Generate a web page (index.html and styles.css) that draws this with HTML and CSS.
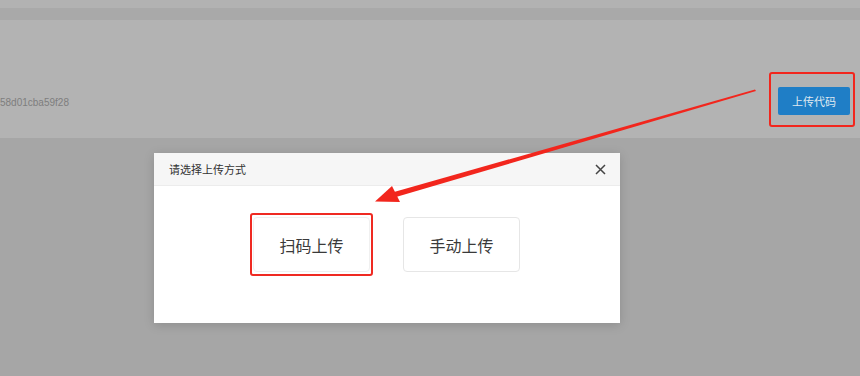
FILE: index.html
```html
<!DOCTYPE html>
<html lang="zh">
<head>
<meta charset="utf-8">
<link rel="stylesheet" href="styles.css">
</head>
<body>
<div class="page">
  <div class="topbar"></div>
  <div class="band"></div>
  <div class="panel">
    <span class="hash">58d01cba59f28</span>
    <div class="mark-box">
      <button class="btn-primary">上传代码</button>
    </div>
  </div>
  <div class="rest"></div>
</div>

<div class="dialog">
  <div class="dialog-head">
    <span class="dialog-title">请选择上传方式</span>
    <svg class="close" width="11" height="11" viewBox="0 0 11 11"><path d="M1 1L10 10M10 1L1 10" stroke="#444" stroke-width="1.5" fill="none"/></svg>
  </div>
  <div class="dialog-body">
    <div class="choice-mark">
      <div class="choice">扫码上传</div>
    </div>
    <div class="choice">手动上传</div>
  </div>
</div>

<svg class="arrow" width="860" height="376" viewBox="0 0 860 376">
  <polygon points="755,89.5 756,91 396,197 394,192" fill="#f2261d"/>
  <polygon points="375,201.5 392,186 400,202" fill="#f2261d"/>
</svg>
</body>
</html>
```

FILE: styles.css
```css
html, body {
  margin: 0;
  padding: 0;
}
body {
  width: 860px;
  height: 376px;
  overflow: hidden;
  background: #a6a6a6;
  font-family: "Liberation Sans", "Noto Sans CJK SC", sans-serif;
  position: relative;
}
.page {
  display: flex;
  flex-direction: column;
  height: 376px;
}
.topbar {
  height: 8px;
  background: #b2b2b2;
}
.band {
  height: 12px;
  background: #a9a9a9;
}
.panel {
  height: 118px;
  box-sizing: border-box;
  background: #b3b3b3;
  display: flex;
  align-items: center;
  justify-content: space-between;
  padding: 52px 5px 11px 0;
}
.hash {
  font-size: 10px;
  color: #7e7e7e;
  margin-left: 0;
  margin-top: 6px;
}
.mark-box {
  border: 2px solid #f2261d;
  border-radius: 3px;
  padding: 13px 3px 10px 7px;
}
.btn-primary {
  display: block;
  width: 72px;
  height: 28px;
  border: none;
  border-radius: 2px;
  background: #1f7ec6;
  color: #dfe8f0;
  font-family: "Noto Sans CJK SC", sans-serif;
  font-size: 11px;
  padding: 0;
}
.rest {
  flex: 1;
  background: #a6a6a6;
}
.dialog {
  position: absolute;
  left: 154px;
  top: 153px;
  width: 466px;
  height: 170px;
  background: #fff;
  box-shadow: 0 2px 10px rgba(0,0,0,0.15);
  display: flex;
  flex-direction: column;
}
.dialog-head {
  height: 33px;
  box-sizing: border-box;
  background: #f6f6f6;
  border-bottom: 1px solid #ececec;
  display: flex;
  align-items: center;
  justify-content: space-between;
  padding: 0 14px 0 15px;
}
.dialog-title {
  font-family: "Noto Sans CJK SC", sans-serif;
  font-size: 11px;
  color: #333;
}
.dialog-body {
  display: flex;
  align-items: flex-start;
  gap: 30px;
  padding: 27px 0 0 96px;
}
.choice-mark {
  border: 2px solid #ef2a22;
  border-radius: 3px;
  padding: 2px 1px;
}
.choice {
  width: 117px;
  height: 55px;
  box-sizing: border-box;
  border: 1px solid #e6e6e6;
  border-radius: 4px;
  display: flex;
  align-items: center;
  justify-content: center;
  font-family: "Noto Sans CJK SC", sans-serif;
  font-size: 16px;
  color: #3a3a3a;
  background: #fff;
}
.choice-mark .choice {
  border-color: #f0f0f0;
}
.dialog-body > .choice {
  margin-top: 4px;
}
.arrow {
  position: absolute;
  left: 0;
  top: 0;
  pointer-events: none;
}
```
